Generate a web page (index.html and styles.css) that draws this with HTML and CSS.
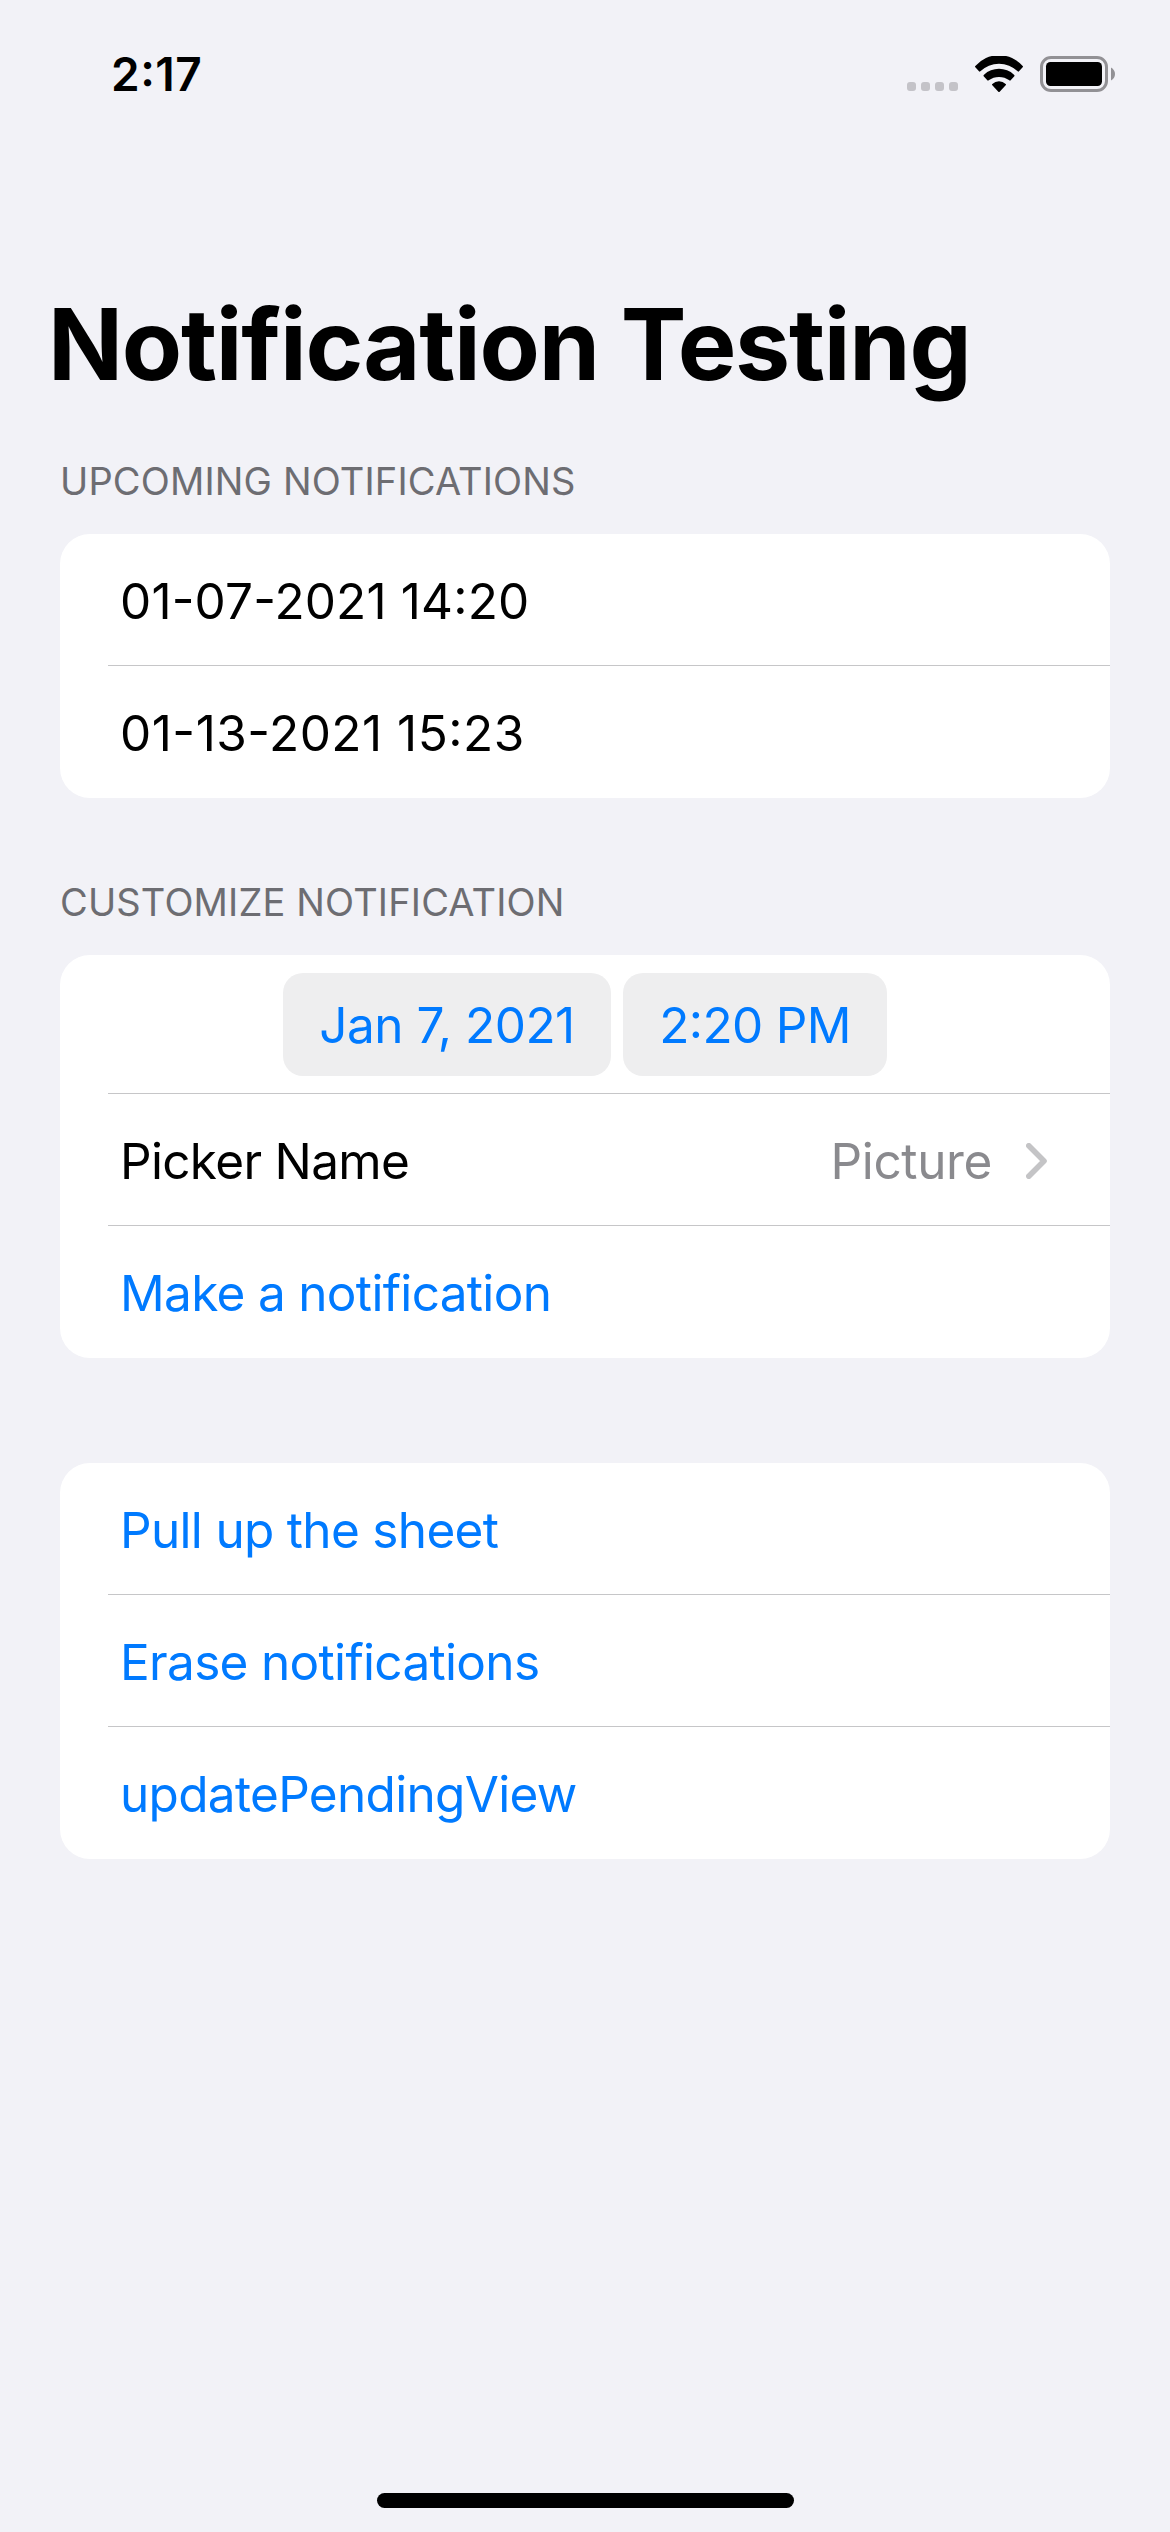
FILE: index.html
```html
<!DOCTYPE html>
<html lang="en">
<head>
<meta charset="utf-8">
<title>Notification Testing</title>
<link rel="stylesheet" href="styles.css">
</head>
<body>
<header class="status-bar">
  <span class="time">2:17</span>
  <div class="status-icons">
    <div class="signal"><i></i><i></i><i></i><i></i></div>
    <svg class="wifi" viewBox="285 75 144 108" aria-hidden="true">
      <path d="M286 105A94 94 0 0 1 428 105Q430 107 428 109L417 121Q415 123 413 121A80 80 0 0 0 301 121Q299 123 297 121L286 109Q284 107 286 105Z"/>
      <path d="M312 131A66 66 0 0 1 402 131Q405 133.500 403 136L392 148Q390 150 388 148A52 52 0 0 0 326 148Q324 150 322 148L311 136Q309 133.500 312 131Z"/>
      <path d="M337 159A29 29 0 0 1 377 159Q379 161 377 163L359 182Q357 184 355 182L337 163Q335 161 337 159Z"/>
    </svg>
    <svg class="battery" viewBox="0 0 75 36" aria-hidden="true">
      <rect class="battery-case" x="1.500" y="1.500" width="65" height="33" rx="9.500"/>
      <rect x="6" y="6" width="56" height="24" rx="4.500"/>
      <path class="battery-cap" d="M71 11.500Q75 14 75 18T71 24.500Z"/>
    </svg>
  </div>
</header>
<main class="content">
  <h1 class="title">Notification Testing</h1>
  <section class="group">
    <h2 class="group-header">UPCOMING NOTIFICATIONS</h2>
    <div class="card">
      <div class="row numeric">01-07-2021 14:20</div>
      <div class="row numeric">01-13-2021 15:23</div>
    </div>
  </section>
  <section class="group">
    <h2 class="group-header">CUSTOMIZE NOTIFICATION</h2>
    <div class="card">
      <div class="row date-row">
        <span class="pill date">Jan 7, 2021</span>
        <span class="pill hour">2:20 PM</span>
      </div>
      <div class="row">
        <span class="label">Picker Name</span>
        <span class="value">Picture</span>
        <svg class="chevron" viewBox="0 0 21 36" aria-hidden="true"><path d="M2.800 2.800L18 18L2.800 33.200"/></svg>
      </div>
      <div class="row action">Make a notification</div>
    </div>
  </section>
  <section class="group">
    <div class="card">
      <div class="row action">Pull up the sheet</div>
      <div class="row action">Erase notifications</div>
      <div class="row action">updatePendingView</div>
    </div>
  </section>
</main>
<footer class="home"><div class="home-bar"></div></footer>
</body>
</html>
```
FILE: styles.css
```css
* { box-sizing: border-box; margin: 0; padding: 0; }

body {
  display: flex;
  flex-direction: column;
  width: 1170px;
  height: 2532px;
  background: #f2f2f7;
  color: #000;
  font-family: Inter, "Liberation Sans", sans-serif;
  font-size: 49.5px;
  font-feature-settings: "calt" 1;
  letter-spacing: -0.68px;
}

.status-bar {
  display: flex;
  justify-content: space-between;
  height: 285px;
  padding: 46px 55px 0 111px;
}

.time {
  font-size: 46px;
  font-weight: 600;
  line-height: 56px;
  letter-spacing: 0.5px;
}

.status-icons { display: flex; height: 46px; align-items: flex-end; }
.signal { display: flex; gap: 5px; margin: 0 17px 1px 0; }
.signal i { width: 9px; height: 9px; border-radius: 3px; background: #c4c3c8; }
.wifi { width: 48px; height: 36px; margin-right: 17px; }
.battery { width: 75px; height: 36px; }
.battery-case { fill: none; stroke: #929195; stroke-width: 3; }
.battery-cap { fill: #929195; }

.content { flex: 1; padding: 0 60px; }

.title {
  margin: 0 -12px 53px;
  font-size: 98.5px;
  font-weight: 700;
  line-height: 120px;
  letter-spacing: -1.235px;
}

.group-header {
  height: 76px;
  color: #6d6d72;
  font-size: 38px;
  font-weight: 400;
  line-height: 46px;
  letter-spacing: 0.15px;
}

.group + .group { margin-top: 81px; }
.group:last-of-type { margin-top: 105px; }

.card { overflow: hidden; border-radius: 30px; background: #fff; }

.row {
  display: flex;
  align-items: center;
  height: 132px;
  padding: 3px 63px 0 12px;
  margin-left: 48px;
  border-bottom: 1px solid #c6c6c8;
}
.row:last-child { border-bottom-color: transparent; }
.numeric { letter-spacing: 0.15px; }
.numeric + .numeric { letter-spacing: 0.5px; }
.action { color: #007aff; }

.date-row { justify-content: center; gap: 12px; height: 139px; padding: 0 48px 0 0; }
.pill {
  height: 103px;
  border-radius: 20px;
  background: #eeeeef;
  color: #007aff;
  line-height: 105px;
  text-align: center;
}
.date { width: 328px; letter-spacing: -0.5px; }
.hour { width: 264px; }

.value { margin-left: auto; color: #8a8a8e; letter-spacing: -0.36px; }
.chevron { width: 21px; height: 36px; margin-left: 34px; fill: none; stroke: #c4c4c6; stroke-width: 5.6; stroke-linecap: round; stroke-linejoin: round; }

.home { display: flex; justify-content: center; height: 39px; }
.home-bar { width: 417px; height: 15px; border-radius: 8px; background: #000; }
```
